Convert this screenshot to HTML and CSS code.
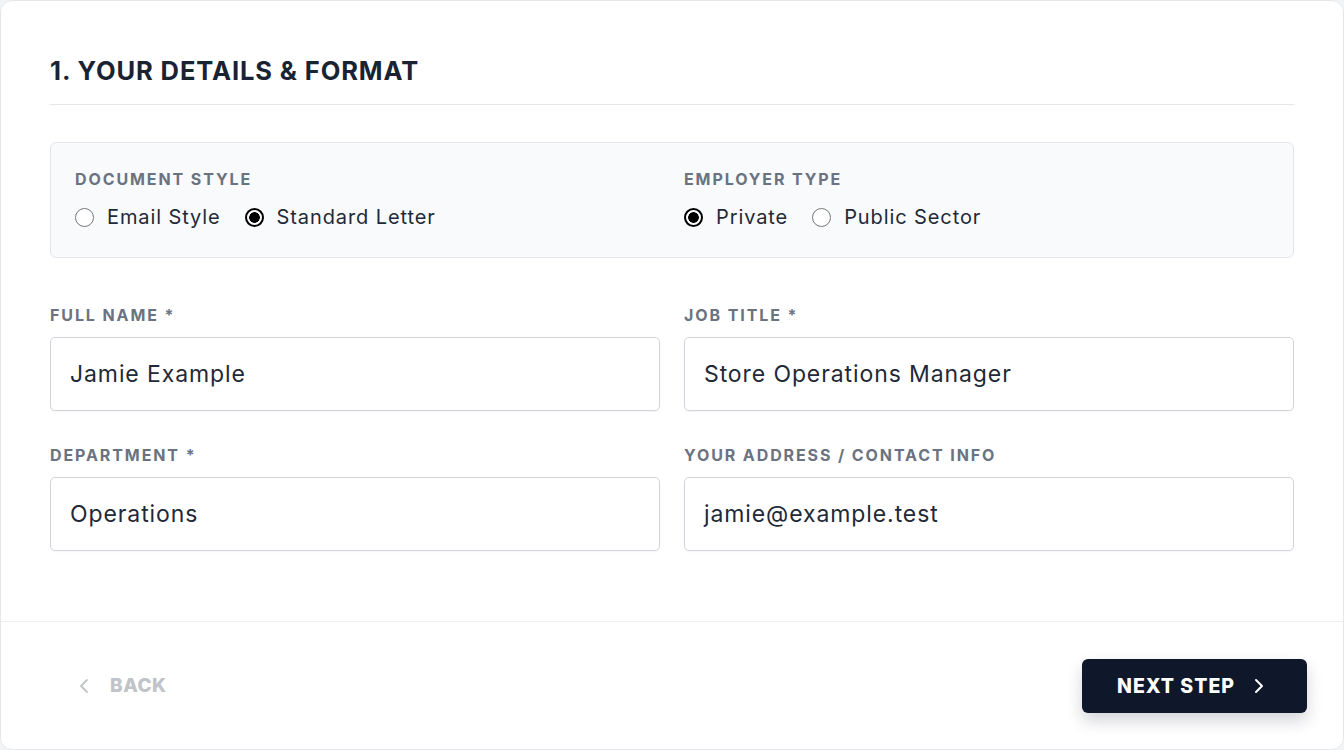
FILE: index.html
```html
<!DOCTYPE html>
<html lang="en">
<head>
<meta charset="utf-8">
<title>Your details &amp; format</title>
<link rel="stylesheet" href="styles.css">
</head>
<body>
<div class="card">
  <div class="content">
    <h2 class="title">1. YOUR DETAILS &amp; FORMAT</h2>
    <div class="options">
      <div class="option-group">
        <div class="label">DOCUMENT STYLE</div>
        <div class="radios">
          <label class="radio"><span class="dot"></span>Email Style</label>
          <label class="radio"><span class="dot on"></span>Standard Letter</label>
        </div>
      </div>
      <div class="option-group">
        <div class="label">EMPLOYER TYPE</div>
        <div class="radios">
          <label class="radio"><span class="dot on"></span>Private</label>
          <label class="radio"><span class="dot"></span>Public Sector</label>
        </div>
      </div>
    </div>
    <div class="fields">
      <div class="field">
        <div class="label">FULL NAME *</div>
        <div class="input">Jamie Example</div>
      </div>
      <div class="field">
        <div class="label">JOB TITLE *</div>
        <div class="input">Store Operations Manager</div>
      </div>
      <div class="field">
        <div class="label">DEPARTMENT *</div>
        <div class="input">Operations</div>
      </div>
      <div class="field">
        <div class="label">YOUR ADDRESS / CONTACT INFO</div>
        <div class="input">jamie@example.test</div>
      </div>
    </div>
  </div>
  <div class="footer">
    <button class="back">
      <svg width="10" height="16" viewBox="0 0 10 16"><path d="M8 2 L2 8 L8 14" fill="none" stroke="currentColor" stroke-width="1.8" stroke-linecap="round" stroke-linejoin="round"/></svg>
      <span>BACK</span>
    </button>
    <button class="next">
      <span>NEXT STEP</span>
      <svg width="10" height="16" viewBox="0 0 10 16"><path d="M2 2 L8 8 L2 14" fill="none" stroke="currentColor" stroke-width="2" stroke-linecap="round" stroke-linejoin="round"/></svg>
    </button>
  </div>
</div>
</body>
</html>
```
FILE: styles.css
```css
html, body {
  margin: 0;
  padding: 0;
  background: #f3f4f6;
}
body {
  font-family: Inter, "Noto Sans", sans-serif;
  color: #1f2937;
}
.card {
  box-sizing: border-box;
  width: 1344px;
  height: 750px;
  background: #ffffff;
  border: 1px solid #e5e7eb;
  border-radius: 12px;
  display: flex;
  flex-direction: column;
}
.content {
  flex: 1;
  padding: 54px 49px 0 49px;
}
.title {
  margin: 0;
  font-size: 25.5px;
  font-weight: 700;
  color: #1a2332;
  line-height: 32px;
  padding-bottom: 17px;
  border-bottom: 1px solid #e5e7eb;
  letter-spacing: 0.9px;
}
.options {
  margin-top: 37px;
  background: #f8fafc;
  border: 1px solid #e5e7eb;
  border-radius: 6px;
  padding: 27px 24px 27px 24px;
  display: grid;
  grid-template-columns: 1fr 1fr;
  column-gap: 24px;
}
.label {
  font-size: 16px;
  font-weight: 700;
  letter-spacing: 1.9px;
  color: #6b7280;
  line-height: 18px;
}
.radios {
  display: flex;
  gap: 24px;
  margin-top: 16px;
}
.radio {
  display: flex;
  align-items: center;
  gap: 13px;
  font-size: 20px;
  letter-spacing: 0.9px;
  line-height: 26px;
  color: #1f2937;
}
.dot {
  box-sizing: border-box;
  width: 19px;
  height: 19px;
  border-radius: 50%;
  border: 1.5px solid #767676;
  background: #fff;
}
.dot.on {
  border: 2px solid #000;
  background: radial-gradient(circle, #000 0 5px, #fff 5.6px);
}
.fields {
  margin-top: 48px;
  display: grid;
  grid-template-columns: 1fr 1fr;
  column-gap: 24px;
  row-gap: 35px;
}
.field .label {
  margin-bottom: 13px;
}
.input {
  box-sizing: border-box;
  height: 74px;
  border: 1px solid #d1d5db;
  border-radius: 5px;
  background: #fff;
  padding: 0 19px;
  display: flex;
  align-items: center;
  font-size: 23px;
  letter-spacing: 0.9px;
  color: #1f2937;
  box-shadow: 0 1px 2px rgba(0,0,0,0.04);
}
.footer {
  border-top: 1px solid #eef0f2;
  height: 128px;
  box-sizing: border-box;
  display: flex;
  align-items: center;
  justify-content: space-between;
  padding: 0 36px 0 40px;
}
button {
  font-family: Inter, "Noto Sans", sans-serif;
  border: none;
  cursor: pointer;
}
.back {
  background: transparent;
  color: #c0c3c8;
  font-size: 19px;
  font-weight: 800;
  letter-spacing: 0.5px;
  display: flex;
  align-items: center;
  gap: 21px;
  padding: 12px 38px;
}
.next {
  background: #0f172a;
  color: #fff;
  font-size: 19.5px;
  font-weight: 800;
  letter-spacing: 1px;
  height: 54px;
  border-radius: 6px;
  display: flex;
  align-items: center;
  gap: 19px;
  padding: 0 43px 0 35px;
  box-shadow: 0 8px 16px rgba(15,23,42,0.18);
}
```
